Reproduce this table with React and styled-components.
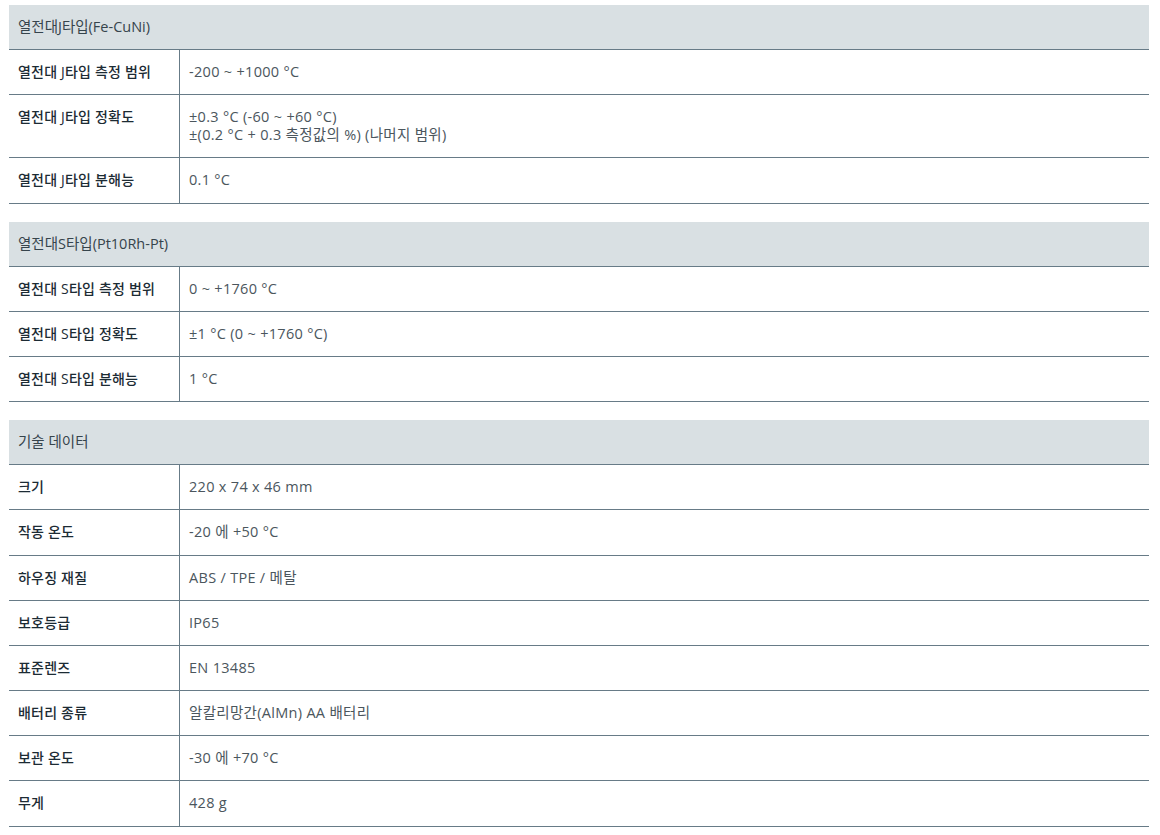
import React from "react";
import styled, { createGlobalStyle } from "styled-components";

const Global = createGlobalStyle`
  html, body { margin: 0; padding: 0; background: #fff; }
  body { font-family: "Open Sans", "Noto Sans CJK KR", sans-serif; font-size: 14px; }
`;

const Page = styled.div`
  padding: 5px 11px 0 9px;
  display: flex;
  flex-direction: column;
  gap: 18px;
`;

const Section = styled.section`
  display: flex;
  flex-direction: column;
`;

const Header = styled.div`
  background: #d9e0e3;
  color: #36444c;
  padding: 13px 9px;
  line-height: 18px;
  border-bottom: 1px solid #677b87;
  font-size: 14.5px;
`;

const Row = styled.div`
  display: grid;
  grid-template-columns: 171px 1fr;
  border-bottom: 1px solid #677b87;
`;

const Label = styled.div`
  padding: 13px 9px 13.2px;
  line-height: 18px;
  color: #1c2b34;
  font-weight: 500;
  font-size: 14px;
  letter-spacing: 0.2px;
  border-right: 1px solid #677b87;
`;

const Value = styled.div`
  padding: 13px 9px 13.2px;
  line-height: 18px;
  color: #4b565d;
  font-size: 14.5px;
  letter-spacing: 0.3px;
`;

const sections = [
  {
    title: "열전대J타입(Fe-CuNi)",
    rows: [
      ["열전대 J타입 측정 범위", ["-200 ~ +1000 °C"]],
      ["열전대 J타입 정확도", ["±0.3 °C (-60 ~ +60 °C)", "±(0.2 °C + 0.3 측정값의 %) (나머지 범위)"]],
      ["열전대 J타입 분해능", ["0.1 °C"]],
    ],
  },
  {
    title: "열전대S타입(Pt10Rh-Pt)",
    rows: [
      ["열전대 S타입 측정 범위", ["0 ~ +1760 °C"]],
      ["열전대 S타입 정확도", ["±1 °C (0 ~ +1760 °C)"]],
      ["열전대 S타입 분해능", ["1 °C"]],
    ],
  },
  {
    title: "기술 데이터",
    rows: [
      ["크기", ["220 x 74 x 46 mm"]],
      ["작동 온도", ["-20 에 +50 °C"]],
      ["하우징 재질", ["ABS / TPE / 메탈"]],
      ["보호등급", ["IP65"]],
      ["표준렌즈", ["EN 13485"]],
      ["배터리 종류", ["알칼리망간(AlMn) AA 배터리"]],
      ["보관 온도", ["-30 에 +70 °C"]],
      ["무게", ["428 g"]],
    ],
  },
];

export default function App() {
  return (
    <>
      <Global />
      <Page>
        {sections.map((s) => (
          <Section key={s.title}>
            <Header>{s.title}</Header>
            {s.rows.map(([label, lines]) => (
              <Row key={label}>
                <Label>{label}</Label>
                <Value>
                  {lines.map((l, i) => (
                    <div key={i}>{l}</div>
                  ))}
                </Value>
              </Row>
            ))}
          </Section>
        ))}
      </Page>
    </>
  );
}
